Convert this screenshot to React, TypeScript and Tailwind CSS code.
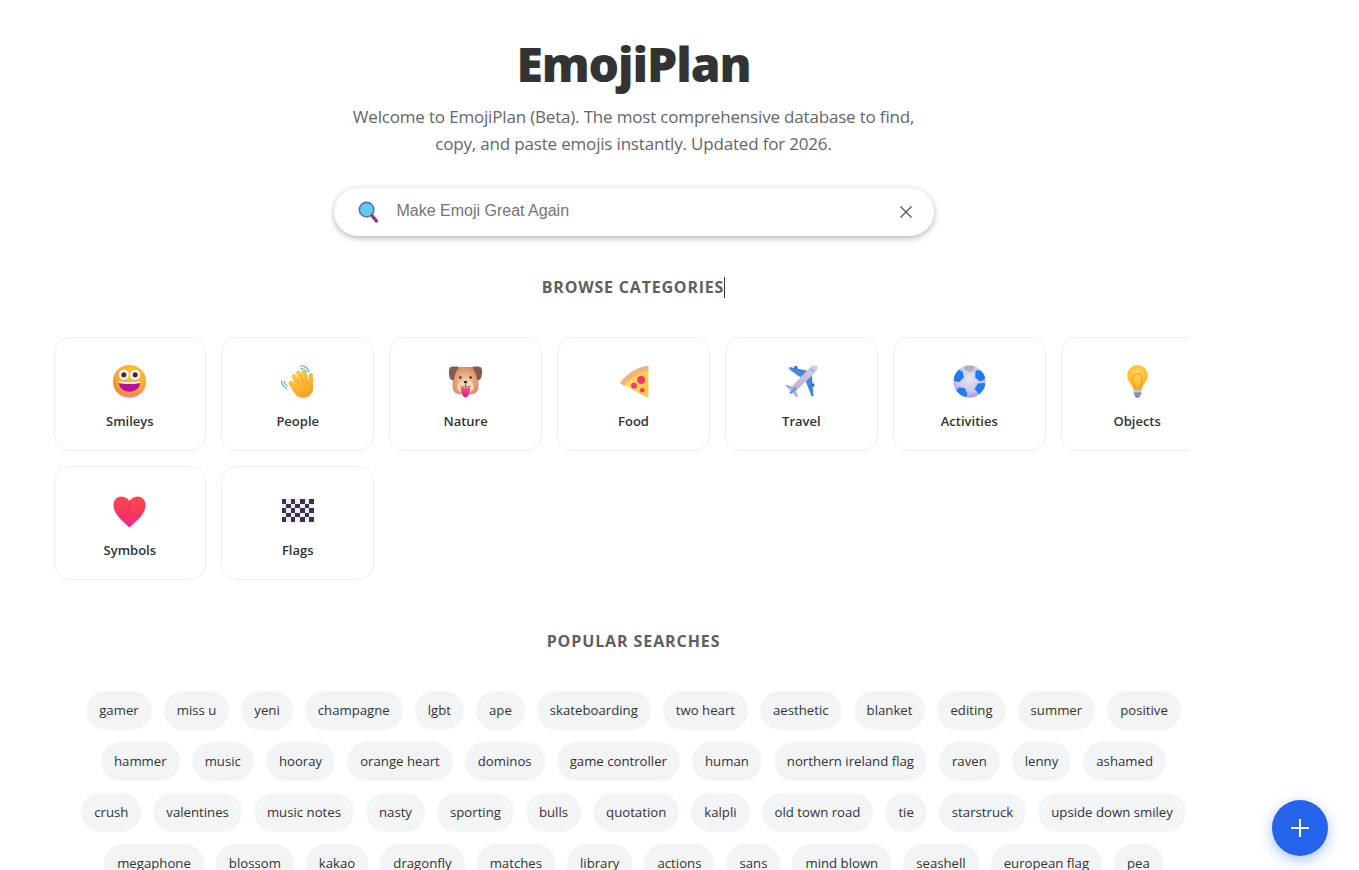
import React from "react";

const Smiley = () => (
  <svg viewBox="0 0 32 32" className="w-[33px] h-[33px]">
    <defs>
      <radialGradient id="sm1" cx="0.58" cy="0.32" r="0.78">
        <stop offset="0" stopColor="#ffc93a" />
        <stop offset="0.6" stopColor="#fbaa30" />
        <stop offset="1" stopColor="#ee6d3c" />
      </radialGradient>
    </defs>
    <rect x="0" y="0" width="32" height="31.5" rx="15.5" fill="url(#sm1)" />
    <path d="M2 24c2 4 8 7.500 14 7.500s11-3 13.500-6.500c-4 3-9 4-13.500 4s-10-1-14-5z" fill="#f58aa0" opacity="0.7" />
    <circle cx="10.500" cy="9.500" r="4.800" fill="#fff" />
    <circle cx="21.500" cy="9.500" r="4.800" fill="#fff" />
    <circle cx="10.500" cy="9.500" r="2.500" fill="#402a32" />
    <circle cx="21.500" cy="9.500" r="2.500" fill="#402a32" />
    <path d="M5.500 15.500c6.500 1.500 14.500 1.500 21 0 .3 6-4.300 10.500-10.500 10.500S5.200 21.500 5.500 15.500z" fill="#b8109a" />
    <path d="M5.500 15.500c6.500 1.500 14.500 1.500 21 0l-.1 2c-6.700 1.300-14.100 1.300-20.800 0z" fill="#fff" />
  </svg>
);

const Wave = () => (
  <svg viewBox="0 0 32 32" className="w-[33px] h-[33px]">
    <defs>
      <linearGradient id="wv1" gradientUnits="userSpaceOnUse" x1="12" y1="5" x2="26" y2="32">
        <stop offset="0" stopColor="#ffd04e" />
        <stop offset="1" stopColor="#fb9d1e" />
      </linearGradient>
    </defs>
    <path d="M19 .8c3.500 0 6.800 2.200 8 5.700M19.500 3.500c2.300.2 4.300 1.600 5.200 3.800" stroke="#2f9be3" strokeWidth="1" fill="none" strokeLinecap="round" />
    <path d="M.5 15.500c.3 3 2 5.700 4.800 7M3 15.500c.3 2 1.300 3.600 3 4.600" stroke="#2f9be3" strokeWidth="1" fill="none" strokeLinecap="round" />
    <circle cx="21.500" cy="22.500" r="9.500" fill="url(#wv1)" />
    <rect x="12" y="17" width="19" height="8" fill="url(#wv1)" />
    <g stroke="url(#wv1)" strokeWidth="4.400" strokeLinecap="round" fill="none">
      <path d="M13.500 24L9.500 17.500" />
      <path d="M16 19L12.500 11" />
      <path d="M20 17.500L16.800 7.500" />
      <path d="M24 17L21.800 6.500" />
      <path d="M28.800 22V10" />
    </g>
    <path d="M14.800 12.500l2.800 6.500M19 9.500l2.700 8M24.400 9l1.500 8.500" stroke="#ec941f" strokeWidth="0.7" fill="none" strokeLinecap="round" />
  </svg>
);

const Dog = () => (
  <svg viewBox="0 0 32 32" className="w-[33px] h-[33px]">
    <defs>
      <radialGradient id="dg1" cx="0.5" cy="0.55" r="0.65">
        <stop offset="0" stopColor="#ffd3a3" />
        <stop offset="0.55" stopColor="#e6a57e" />
        <stop offset="1" stopColor="#cb7f63" />
      </radialGradient>
      <linearGradient id="dg2" x1="0" y1="0" x2="0" y2="1">
        <stop offset="0" stopColor="#ef4f8e" />
        <stop offset="1" stopColor="#d81b82" />
      </linearGradient>
    </defs>
    <rect x="3.500" y="2" width="25" height="26.500" rx="7" fill="url(#dg1)" />
    <path d="M0 5c0-2.500 2-3.500 4-3.500h4c1 0 1.500.8 1 1.500-2 2.500-3.300 6-4 10-.3 1.500-1.800 2-3 1C.3 12.500 0 10 0 5z" fill="#84594f" />
    <path d="M32 5c0-2.500-2-3.500-4-3.500h-4c-1 0-1.500.8-1 1.500 2 2.500 3.300 6 4 10 .3 1.500 1.800 2 3 1 1.700-1.500 2-4 2-9.500z" fill="#84594f" />
    <ellipse cx="16" cy="21" rx="8" ry="6.500" fill="#ffd9ae" />
    <circle cx="11" cy="12" r="1.200" fill="#3e2a2c" />
    <circle cx="21" cy="12" r="1.200" fill="#3e2a2c" />
    <ellipse cx="16" cy="16.500" rx="1.800" ry="1.300" fill="#3e2a2c" />
    <path d="M16 17v4M11 20.500c2 1 3.500 1 5 .5 1.500.5 3 .5 5-.5" stroke="#6e4638" strokeWidth="0.8" fill="none" />
    <path d="M11.500 22c2.500 0 6.500 0 9 0 0 4-1.800 9.500-4.500 9.500S11.500 26 11.500 22z" fill="url(#dg2)" />
  </svg>
);

const Pizza = () => (
  <svg viewBox="-3 0 32 32" className="w-[33px] h-[33px]">
    <defs>
      <linearGradient id="pz1" x1="0" y1="0" x2="1" y2="1">
        <stop offset="0" stopColor="#ffe069" />
        <stop offset="1" stopColor="#fdc23e" />
      </linearGradient>
    </defs>
    <path d="M27.500.5C17 2 7 8 .5 16.500c-.5.800-.3 1.500.4 1.900l3 1.700c.7.300 1.300 0 1.700-.6C11 12 19 7.500 27.500 6.500z" fill="#f6b080" />
    <path d="M27.500 5.500C18 7 10 12 4.500 19.500L25 31c1.300.6 2.500 0 2.500-1.500z" fill="url(#pz1)" />
    <circle cx="20.500" cy="14.500" r="4" fill="#f0386f" />
    <circle cx="13.500" cy="20" r="2.800" fill="#f0386f" />
    <circle cx="21.500" cy="24.500" r="2.200" fill="#f0386f" />
  </svg>
);

const Plane = () => (
  <svg viewBox="0 0 32 32" className="w-[33px] h-[33px]">
    <defs>
      <linearGradient id="pl1" x1="0" y1="1" x2="1" y2="0">
        <stop offset="0" stopColor="#b7a4c8" />
        <stop offset="1" stopColor="#d8d0e2" />
      </linearGradient>
    </defs>
    <path d="M4.500 4.500c-1-1.200-.2-2.800 1.300-2.400L22 5.500l-6 7z" fill="#3f8be0" />
    <path d="M27.500 28c1 1.500-.5 3-2 2L19.500 14 26 9z" fill="#3f8be0" />
    <rect x="9" y="1" width="3" height="3.500" fill="#3a6fb8" />
    <rect x="25" y="18" width="3.500" height="3" fill="#3a6fb8" />
    <path d="M31 1c-1.500-1.500-4.500-1-6.500 1L7 20.500l-5.500-1.300c-.8-.1-1.300.7-.8 1.300L6 25.500l5 5.700c.6.500 1.500 0 1.300-.8L11 25 29 7.500c2-2 3.500-5 2-6.500z" fill="url(#pl1)" />
    <path d="M5 27.500l5.500-5.500" stroke="#4aa3f0" strokeWidth="2.400" />
    <path d="M25.500 4l2 2" stroke="#22b5e8" strokeWidth="1" />
  </svg>
);

const Ball = () => (
  <svg viewBox="0 0 32 32" className="w-[33px] h-[33px]">
    <defs>
      <radialGradient id="bl1" cx="0.5" cy="0.42" r="0.6">
        <stop offset="0" stopColor="#e6e4f3" />
        <stop offset="0.7" stopColor="#c9c5e8" />
        <stop offset="1" stopColor="#9a92e4" />
      </radialGradient>
      <clipPath id="bl2"><circle cx="16" cy="16" r="15.500" /></clipPath>
    </defs>
    <circle cx="16" cy="16" r="15.500" fill="url(#bl1)" />
    <g clipPath="url(#bl2)" fill="#1f7bf2">
      <path d="M11 -1h10l-.5 5.500L16 7l-4.500-2.500z" fill="#aeb1c2" />
      <path d="M22 5l5 .5 4.500 5-1 3.500-4.500 2-4.500-4z" />
      <path d="M0 9.500L5 4l4.500 2.500 1 5.500L6 16.500l-5-1z" />
      <path d="M24 18l6.500-.5 1.500 2.500-2 7-5 1-4-4.500z" />
      <path d="M6 21.500l5.500 1 2.500 5.500-2 4.500H5l-4.500-5z" />
      <path d="M16 29.500l6-1 2.500 4H15z" fill="#a9a0f0" />
    </g>
  </svg>
);

const Bulb = () => (
  <svg viewBox="0 0 32 32" className="w-[33px] h-[33px]">
    <defs>
      <radialGradient id="bb1" cx="0.5" cy="0.35" r="0.7">
        <stop offset="0" stopColor="#ffd75c" />
        <stop offset="0.7" stopColor="#ffb92c" />
        <stop offset="1" stopColor="#f59a1f" />
      </radialGradient>
      <linearGradient id="bb2" x1="0" y1="0" x2="0" y2="1">
        <stop offset="0" stopColor="#c7bcd4" />
        <stop offset="1" stopColor="#8c7d9e" />
      </linearGradient>
    </defs>
    <g transform="translate(1.600 0) scale(0.9 1)">
      <path d="M16 0C9.800 0 5 4.800 5 10.500c0 6 5.700 8.500 6.800 13.500h8.400c1.100-5 6.800-7.500 6.800-13.500C27 4.800 22.200 0 16 0z" fill="url(#bb1)" />
      <path d="M13 23c-.5-4-2.200-6-2.200-9.500a5.200 5.200 0 0110.400 0c0 3.500-1.700 5.500-2.200 9.500" fill="none" stroke="#f3a021" strokeWidth="1.300" />
      <rect x="12" y="23.500" width="8" height="6" rx="1" fill="url(#bb2)" />
      <rect x="11.500" y="25" width="9" height="1" fill="#d9d1e2" />
      <rect x="13.500" y="29.500" width="5" height="2" rx="1" fill="#7b6c8e" />
    </g>
  </svg>
);

const Heart = () => (
  <svg viewBox="0 -2 32 32" className="w-[33px] h-[33px] overflow-visible">
    <defs>
      <linearGradient id="ht1" x1="0.5" y1="0" x2="0.5" y2="1">
        <stop offset="0" stopColor="#ff4a4f" />
        <stop offset="0.6" stopColor="#f7345f" />
        <stop offset="1" stopColor="#e826a8" />
      </linearGradient>
    </defs>
    <path d="M16 4.500C13.500 1.500 10.500.5 8 .5 3.500.5.500 4 .5 9c0 9 9.500 15.500 15.500 21.500C22 24.500 31.500 18 31.500 9c0-5-3-8.500-7.500-8.500-2.500 0-5.500 1-8 4z" fill="url(#ht1)" />
    <path d="M16 5c-2 2-2 7 0 11 2-4 2-9 0-11z" fill="#d81f4f" opacity="0.2" />
  </svg>
);

const Flag = () => (
  <div className="grid grid-cols-[repeat(7,1fr)] grid-rows-[repeat(5,1fr)] w-8 h-[23px] bg-[#efe8fb]">
    {Array.from({ length: 35 }).map((_, i) => (
      <div key={i} className={i % 2 === 0 ? "bg-[#3b3440]" : ""} />
    ))}
  </div>
);

const SearchIcon = () => (
  <svg viewBox="0 0 22 24" className="w-[21px] h-[23px]">
    <circle cx="9" cy="9" r="7.600" fill="#5dcdee" stroke="#5f6fa8" strokeWidth="1.600" />
    <path d="M14.800 15.500l4.600 5.500" stroke="#7c4488" strokeWidth="3.400" strokeLinecap="round" />
  </svg>
);

const categories = [
  { name: "Smileys", icon: <Smiley /> },
  { name: "People", icon: <Wave /> },
  { name: "Nature", icon: <Dog /> },
  { name: "Food", icon: <Pizza /> },
  { name: "Travel", icon: <Plane /> },
  { name: "Activities", icon: <Ball /> },
  { name: "Objects", icon: <Bulb /> },
  { name: "Symbols", icon: <Heart /> },
  { name: "Flags", icon: <Flag /> },
];

const searches = [
  "gamer", "miss u", "yeni", "champagne", "lgbt", "ape", "skateboarding", "two heart", "aesthetic", "blanket", "editing", "summer", "positive",
  "hammer", "music", "hooray", "orange heart", "dominos", "game controller", "human", "northern ireland flag", "raven", "lenny", "ashamed",
  "crush", "valentines", "music notes", "nasty", "sporting", "bulls", "quotation", "kalpli", "old town road", "tie", "starstruck", "upside down smiley",
  "megaphone", "blossom", "kakao", "dragonfly", "matches", "library", "actions", "sans", "mind blown", "seashell", "european flag", "pea",
];

export default function App() {
  return (
    <div className="h-[870px] overflow-hidden bg-white font-['Open_Sans',sans-serif]">
      <div className="w-[1267px] flex flex-col items-center">
        <h1 className="mt-[32px] text-[48px] leading-[64px] font-extrabold tracking-[-1.1px] text-[#333]">EmojiPlan</h1>
        <p className="mt-[8px] w-[600px] text-center text-[17px] leading-[26.500px] tracking-[-0.18px] text-[#666]">
          Welcome to EmojiPlan (Beta). The most comprehensive database to find,<br />
          copy, and paste emojis instantly. Updated for 2026.
        </p>
        <div className="mt-[31px] flex h-12 w-[600px] items-center rounded-full bg-white pl-[24px] pr-[22px] shadow-[0_2px_6px_rgba(0,0,0,0.3)]">
          <SearchIcon />
          <span className="ml-[18px] flex-1 font-['Liberation_Sans',sans-serif] text-base text-[#757575] -translate-y-px">Make Emoji Great Again</span>
          <svg viewBox="0 0 12 12" className="h-3 w-3" fill="none" stroke="#44546a" strokeWidth="1.300">
            <path d="M.5.500l11 11M11.500.500l-11 11" />
          </svg>
        </div>
        <div className="mt-[40px] flex h-[22px] items-center text-[16px] font-bold tracking-[0.8px] text-[#5f5f5f]">
          <span>BROWSE CATEGORIES</span>
          <span className="h-[21px] border-l border-[#333]" />
        </div>
        <div className="mt-[39px] ml-[53.500px] w-[1135.500px] self-start overflow-hidden">
          <div className="grid w-[1160px] grid-cols-[repeat(7,152.600px)] gap-x-[15.300px] gap-y-[15px]">
            {categories.map((c) => (
              <div key={c.name} className="flex h-[114px] flex-col items-center rounded-2xl border border-[#eeeeee] bg-white">
                <div className="mt-[27px] flex h-[33px] items-center justify-center">{c.icon}</div>
                <div className="mt-[13px] text-[13px] font-semibold leading-[20px] text-[#333]">{c.name}</div>
              </div>
            ))}
          </div>
        </div>
        <div className="mt-[50px] h-[22px] text-[16px] font-bold leading-[22px] tracking-[0.9px] text-[#5f5f5f]">POPULAR SEARCHES</div>
        <div className="mt-[39px] flex w-[1125px] flex-wrap justify-center gap-3">
          {searches.map((s) => (
            <span key={s} className="flex h-[39px] items-center rounded-full bg-[#f3f4f6] px-[13px] text-[13.200px] text-[#333]">{s}</span>
          ))}
        </div>
      </div>
      <button className="fixed bottom-[14px] right-[31px] flex h-14 w-14 items-center justify-center rounded-full bg-[#2563eb] shadow-[0_4px_14px_rgba(37,99,235,0.4)]">
        <svg viewBox="0 0 18 18" className="h-[18px] w-[18px]" stroke="#fff" strokeWidth="2">
          <path d="M9 0v18M0 9h18" />
        </svg>
      </button>
    </div>
  );
}
